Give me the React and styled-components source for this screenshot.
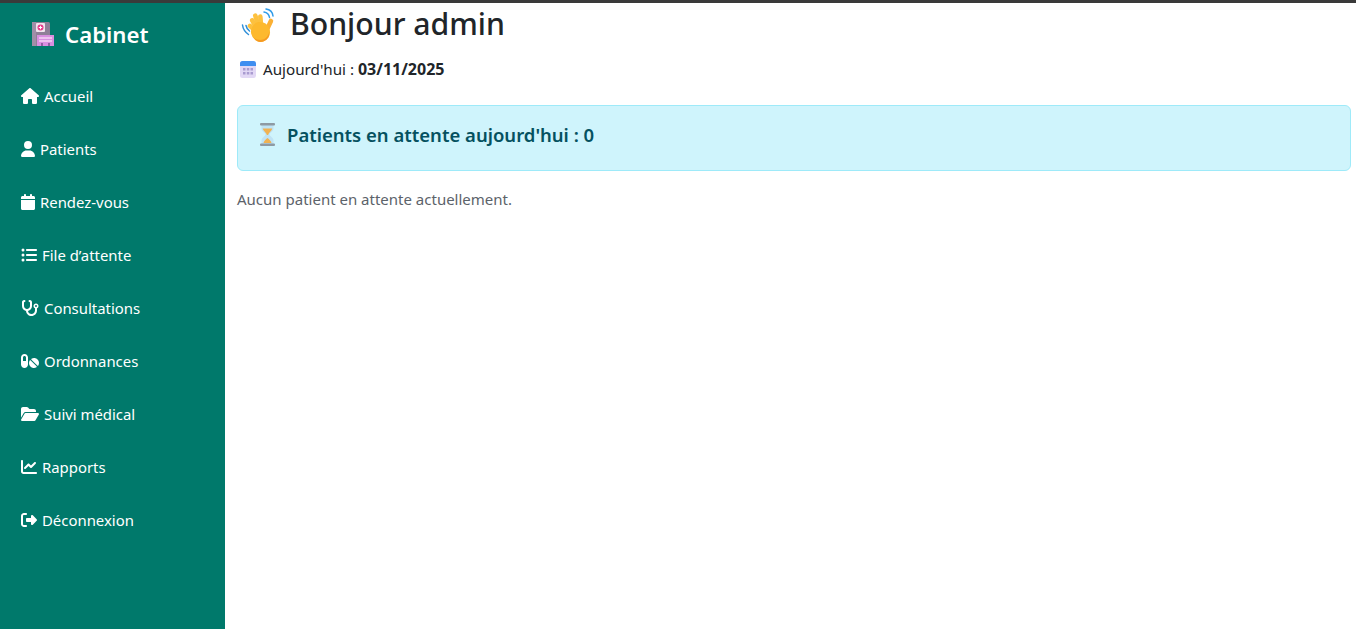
import React from "react";
import styled, { createGlobalStyle } from "styled-components";
import {
  FaHouse,
  FaUser,
  FaCalendar,
  FaListUl,
  FaStethoscope,
  FaPills,
  FaFolderOpen,
  FaChartLine,
  FaRightFromBracket
} from "react-icons/fa6";

const GlobalStyle = createGlobalStyle`
  html, body {
    margin: 0;
    height: 100%;
    background: #fff;
    overflow: hidden;
  }
  body {
    font-family: "Noto Sans", "Open Sans", sans-serif;
    color: #212529;
  }
`;

const TopLine = styled.div`
  height: 3px;
  background: #3a3a3a;
`;

const Page = styled.div`
  display: flex;
  height: 626px;
`;

const Sidebar = styled.aside`
  width: 225px;
  flex-shrink: 0;
  background: #00796b;
  color: #fff;
`;

const Brand = styled.div`
  display: flex;
  align-items: center;
  gap: 11px;
  height: 62px;
  padding-left: 32px;
  font-size: 22.2px;
  font-weight: 600;
`;

const Nav = styled.ul`
  list-style: none;
  margin: 4px 0 0;
  padding: 0 0 0 21px;
`;

const NavItem = styled.li`
  display: flex;
  align-items: center;
  gap: 5px;
  height: 53px;
  font-size: 14.9px;
  svg {
    width: ${p => p.$icon}px;
    height: 16px;
    flex-shrink: 0;
  }
`;

const Main = styled.main`
  flex: 1;
  padding: 0 5px 0 12px;
`;

const Title = styled.h1`
  display: flex;
  align-items: center;
  gap: 14px;
  margin: 0;
  height: 40px;
  padding-left: 3px;
  font-size: 30.2px;
  font-weight: 500;
  svg {
    margin-top: 4px;
  }
`;

const DateLine = styled.p`
  display: flex;
  align-items: center;
  gap: 7px;
  margin: 14px 0 0;
  height: 24px;
  padding-left: 3px;
  font-size: 15.2px;
  strong {
    font-size: 16px;
    font-weight: 700;
  }
`;

const Alert = styled.div`
  display: flex;
  align-items: center;
  gap: 12px;
  box-sizing: border-box;
  height: 66px;
  margin-top: 24px;
  padding: 0 0 8px 22px;
  background: #cff4fc;
  border: 1px solid #9eeaf9;
  border-radius: 6px;
  color: #055160;
  font-size: 18.5px;
  font-weight: 600;
`;

const Muted = styled.p`
  margin: 16px 0 0;
  line-height: 24px;
  font-size: 15px;
  color: #5c636a;
`;

const HospitalIcon = () => (
  <svg width="22" height="25" viewBox="0 0 22 25">
    <rect x="0" y="0" width="18" height="24" rx="1.5" fill="#8f7f97" />
    <rect x="0" y="0" width="4" height="24" fill="#a08fa8" />
    <rect x="4" y="1" width="9" height="9" rx="1" fill="#f1e4ee" />
    <circle cx="8.5" cy="5.5" r="3" fill="#e8388a" />
    <path d="M8.5 3.8v3.4M6.8 5.5h3.4" stroke="#fff" strokeWidth="1.1" />
    <rect x="5" y="13" width="17" height="11" fill="#d98fe0" />
    <path d="M7 16h13M7 19h13" stroke="#f4d5f4" strokeWidth="1.3" />
    <rect x="9" y="21" width="2" height="3" fill="#8f5fa0" />
    <rect x="16" y="21" width="2" height="3" fill="#8f5fa0" />
  </svg>
);

const WaveIcon = () => (
  <svg width="36" height="34" viewBox="0 0 36 34">
    <g fill="none" strokeLinecap="round">
      <path d="M24 4C27 4.500 29 6.500 29.500 9.500M26 1C30 1.500 32.500 4 33 8" stroke="#2f9be8" strokeWidth="1.5" />
      <path d="M2.500 17C3 21 5 24 8.500 26.500M6 17.500C6.500 20 7.500 21.500 9.500 23" stroke="#2f8fd8" strokeWidth="1.5" />
    </g>
    <g transform="rotate(-12 20 24)">
      <g fill="none" strokeLinecap="round">
        <g stroke="#fdc13f" strokeWidth="4.6">
          <path d="M17 24L11.500 16" />
          <path d="M18 22L14.800 11" />
          <path d="M20 21L18.800 7" />
          <path d="M22 21L23.500 9" />
        </g>
        <path d="M25 26L33 15.500" stroke="#fbb034" strokeWidth="4.6" />
      </g>
      <ellipse cx="20.500" cy="24" rx="9.500" ry="10" fill="#fdb92e" />
      <path d="M12 27C15 33 25 35 29 26C28 32 24 34 20 34C16 34 13.500 31 12 27z" fill="#f59a23" />
    </g>
  </svg>
);

const CalendarIcon = () => (
  <svg width="16" height="17" viewBox="0 0 16 17">
    <rect x="0" y="0" width="16" height="17" rx="2.500" fill="#e2d8f5" />
    <path d="M0 5V2.500A2.500 2.500 0 0 1 2.500 0h11A2.500 2.500 0 0 1 16 2.500V5z" fill="#3f8ef0" />
    <path
      d="M3 7h2.500v2.500H3zM6.800 7h2.500v2.500H6.800zM10.500 7H13v2.500h-2.500zM3 11h2.500v2.500H3zM6.800 11h2.500v2.500H6.800zM10.500 11H13v2.500h-2.500z"
      fill="#a99bd0"
    />
  </svg>
);

const HourglassIcon = () => (
  <svg width="15" height="23" viewBox="0 0 15 23">
    <path d="M1.500 2h12v3.500c0 3-4 4.500-4 6s4 3 4 6V21h-12v-3.500c0-3 4-4.500 4-6s-4-3-4-6z" fill="#bfe3f5" />
    <path d="M2.700 5.500h9.600c-.6 2.600-3.600 3.600-4.200 6.500H6.900C6.300 9.100 3.300 8.100 2.700 5.500z" fill="#f0b252" />
    <path d="M3.500 20c.4-2.500 3-4 4-5 1 1 3.600 2.500 4 5z" fill="#f0b252" />
    <rect x="0" y="0" width="15" height="2.500" rx="1" fill="#8e9aa3" />
    <rect x="0" y="20.500" width="15" height="2.500" rx="1" fill="#8e9aa3" />
  </svg>
);

const navItems = [
  { label: "Accueil", Icon: FaHouse, icon: 18 },
  { label: "Patients", Icon: FaUser, icon: 14 },
  { label: "Rendez-vous", Icon: FaCalendar, icon: 14 },
  { label: "File d’attente", Icon: FaListUl, icon: 16 },
  { label: "Consultations", Icon: FaStethoscope, icon: 18 },
  { label: "Ordonnances", Icon: FaPills, icon: 18 },
  { label: "Suivi médical", Icon: FaFolderOpen, icon: 18 },
  { label: "Rapports", Icon: FaChartLine, icon: 16 },
  { label: "Déconnexion", Icon: FaRightFromBracket, icon: 16 }
];

const App = () => (
  <>
    <GlobalStyle />
    <TopLine />
    <Page>
      <Sidebar>
        <Brand>
          <HospitalIcon />
          Cabinet
        </Brand>
        <Nav>
          {navItems.map(({ label, Icon, icon }) => (
            <NavItem key={label} $icon={icon}>
              <Icon />
              {label}
            </NavItem>
          ))}
        </Nav>
      </Sidebar>
      <Main>
        <Title>
          <WaveIcon />
          Bonjour admin
        </Title>
        <DateLine>
          <CalendarIcon />
          <span>
            Aujourd'hui : <strong>03/11/2025</strong>
          </span>
        </DateLine>
        <Alert>
          <HourglassIcon />
          Patients en attente aujourd'hui : 0
        </Alert>
        <Muted>Aucun patient en attente actuellement.</Muted>
      </Main>
    </Page>
  </>
);

export default App;
